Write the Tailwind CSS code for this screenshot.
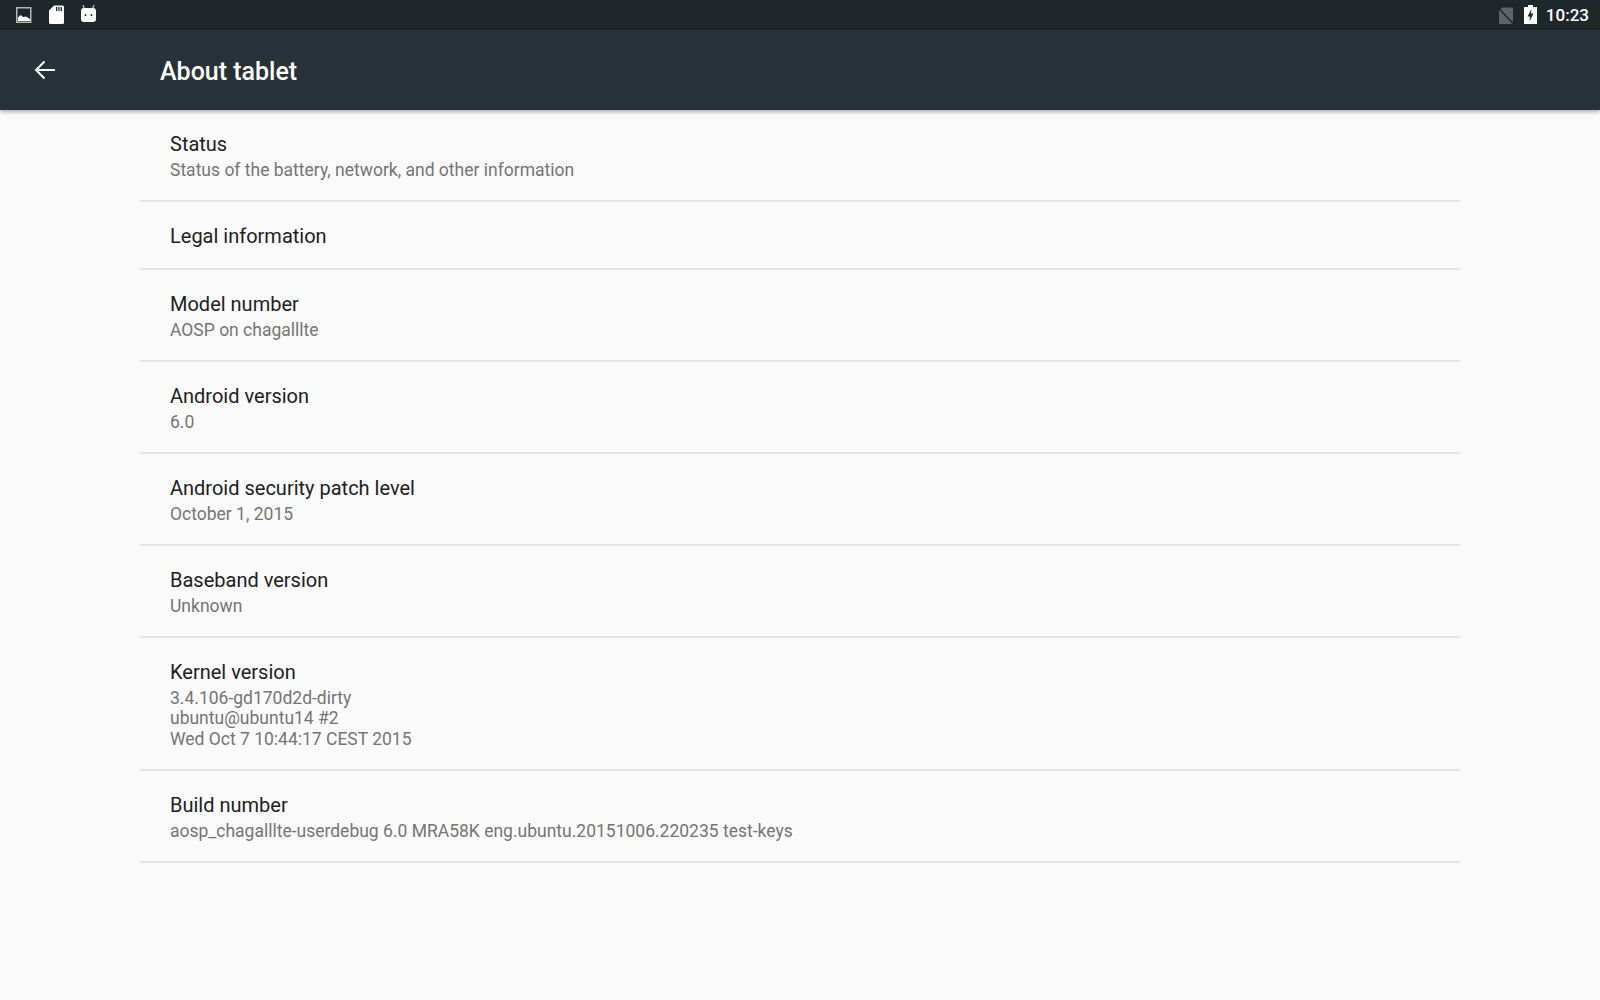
<!DOCTYPE html>
<html lang="en">
<head>
  <meta charset="UTF-8" />
  <title>About tablet</title>
  <script src="https://cdn.jsdelivr.net/npm/@tailwindcss/browser@4"></script>
</head>
<body class="bg-[#fafafa] font-['Roboto',sans-serif] w-[1600px] h-[1000px] overflow-hidden">
  <!-- status bar -->
  <div class="h-[30px] bg-[#1f272b] flex items-start justify-between pl-[16px] pr-[11px]">
    <div class="flex items-start pt-[5px]">
      <svg width="16" height="20" viewBox="0 0 16 20" class="mr-[17px]"><rect x="0.750" y="2.750" width="14" height="14.500" fill="none" stroke="#b4b6b7" stroke-width="1.500"/><path d="M2 16V12.500L4.500 10L7 12L10 11.500L14 14V16Z" fill="#fff"/></svg>
      <svg width="16" height="20" viewBox="0 0 16 20" class="mr-[16px]"><path d="M5 0.500H13.500a1.500 1.500 0 0 1 1.500 1.500V17.500a1.500 1.500 0 0 1-1.500 1.500H1.500a1.500 1.500 0 0 1-1.500-1.500V5.500Z" fill="#fff"/><path d="M7 2h1.300v4H7ZM9.300 2h1.300v4H9.300ZM11.600 2h1.300v4h-1.300Z" fill="#1f272b"/></svg>
      <svg width="16" height="18" viewBox="0 0 16 18"><path d="M2 0L3.500 4M13 0L11.500 4" stroke="#c8c8c8" stroke-width="1.200"/><path d="M3 3H12a3 3 0 0 1 3 3V14a3 3 0 0 1-3 3H3a3 3 0 0 1-3-3V6A3 3 0 0 1 3 3Z" fill="#fff"/><circle cx="4.500" cy="10" r="1" fill="#1f272b"/><circle cx="10.500" cy="10" r="1" fill="#1f272b"/></svg>
    </div>
    <div class="flex items-start">
      <svg width="17" height="18" viewBox="0 0 17 18" class="mt-[7px] mr-[9px]"><path d="M4 0.500H15V17H1V3.500Z" fill="#5f6467"/><path d="M0.500 1L16 17.500" stroke="#1f272b" stroke-width="1.500"/></svg>
      <svg width="13" height="19" viewBox="0 0 13 19" class="mt-[5px] mr-[9px]"><path d="M4 0H9V2H13V19H0V2H4Z" fill="#fff"/><path d="M7.500 4L3.500 11.500H6L5.500 16.500L9.500 8.500H7Z" fill="#1f272b"/></svg>
      <span class="text-[17px] leading-[30px] font-medium text-white">10:23</span>
    </div>
  </div>

  <!-- toolbar -->
  <div class="h-[80px] bg-[#263238] flex items-center shadow-[0_2px_4px_rgba(0,0,0,0.3)] relative">
    <div class="w-[160px] pl-[34px] -mt-[1px] shrink-0">
      <svg width="22" height="22" viewBox="0 0 22 22" class="block"><path d="M21 11H2.500M10.500 2.500L2 11L10.500 19.500" fill="none" stroke="#fff" stroke-width="2"/></svg>
    </div>
    <h1 class="text-[25px] font-medium text-white leading-none mt-[3px]">About tablet</h1>
  </div>

  <!-- list -->
  <div class="ml-[140px] w-[1320px]">
    <div class="h-[92px] border-b-2 border-[#e6e6e6] pl-[30px] pt-[20px]">
      <div class="text-[20px] leading-[28px] text-[#212121]">Status</div>
      <div class="text-[17.500px] leading-[22px] mt-[1px] text-[#757575]">Status of the battery, network, and other information</div>
    </div>
    <div class="h-[68px] border-b-2 border-[#e6e6e6] pl-[30px] pt-[20px]">
      <div class="text-[20px] leading-[28px] text-[#212121]">Legal information</div>
    </div>
    <div class="h-[92px] border-b-2 border-[#e6e6e6] pl-[30px] pt-[20px]">
      <div class="text-[20px] leading-[28px] text-[#212121]">Model number</div>
      <div class="text-[17.500px] leading-[22px] mt-[1px] text-[#757575]">AOSP on chagalllte</div>
    </div>
    <div class="h-[92px] border-b-2 border-[#e6e6e6] pl-[30px] pt-[20px]">
      <div class="text-[20px] leading-[28px] text-[#212121]">Android version</div>
      <div class="text-[17.500px] leading-[22px] mt-[1px] text-[#757575]">6.0</div>
    </div>
    <div class="h-[92px] border-b-2 border-[#e6e6e6] pl-[30px] pt-[20px]">
      <div class="text-[20px] leading-[28px] text-[#212121]">Android security patch level</div>
      <div class="text-[17.500px] leading-[22px] mt-[1px] text-[#757575]">October 1, 2015</div>
    </div>
    <div class="h-[92px] border-b-2 border-[#e6e6e6] pl-[30px] pt-[20px]">
      <div class="text-[20px] leading-[28px] text-[#212121]">Baseband version</div>
      <div class="text-[17.500px] leading-[22px] mt-[1px] text-[#757575]">Unknown</div>
    </div>
    <div class="h-[133px] border-b-2 border-[#e6e6e6] pl-[30px] pt-[20px]">
      <div class="text-[20px] leading-[28px] text-[#212121]">Kernel version</div>
      <div class="text-[17.500px] leading-[20.500px] mt-[1.500px] text-[#757575]">3.4.106-gd170d2d-dirty<br />ubuntu@ubuntu14 #2<br />Wed Oct 7 10:44:17 CEST 2015</div>
    </div>
    <div class="h-[92px] border-b-2 border-[#e6e6e6] pl-[30px] pt-[20px]">
      <div class="text-[20px] leading-[28px] text-[#212121]">Build number</div>
      <div class="text-[17.500px] leading-[22px] mt-[1px] text-[#757575]">aosp_chagalllte-userdebug 6.0 MRA58K eng.ubuntu.20151006.220235 test-keys</div>
    </div>
  </div>
</body>
</html>
